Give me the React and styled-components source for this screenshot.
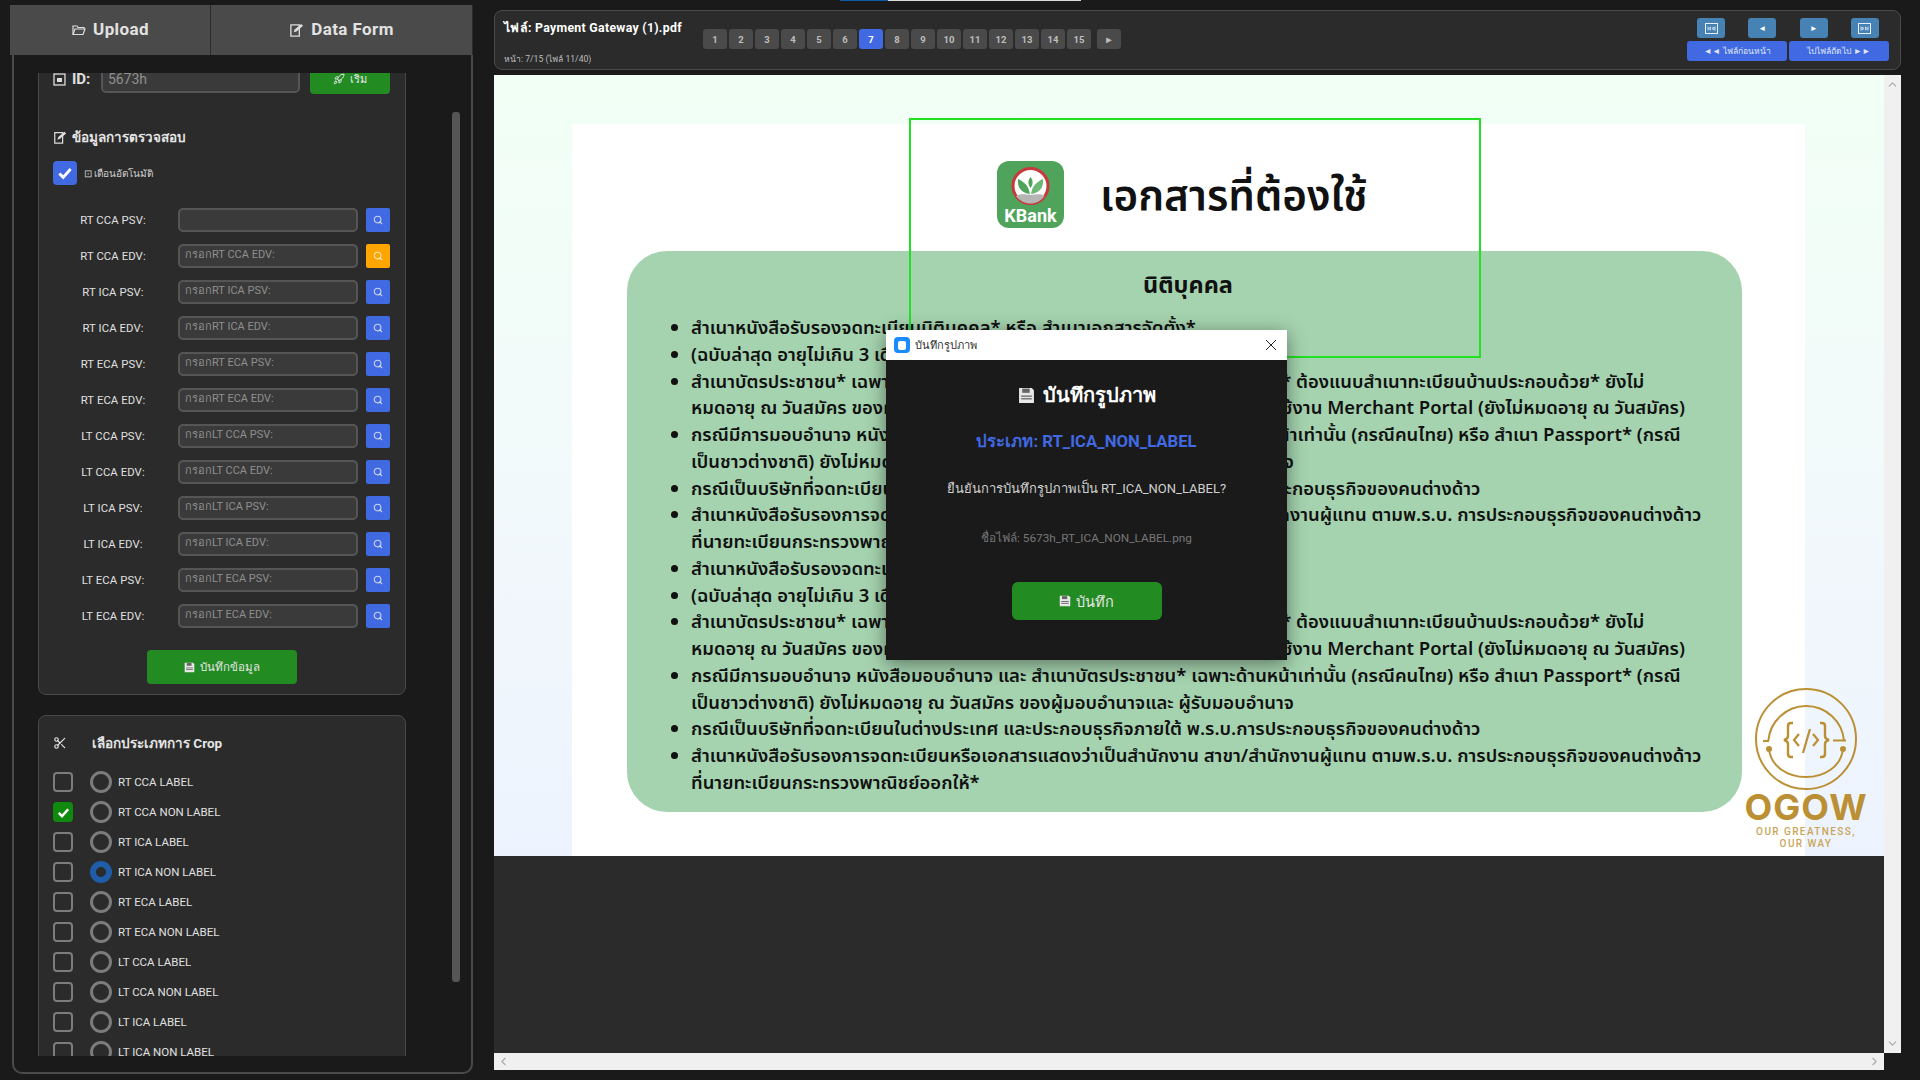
import React from 'react';
import styled, { createGlobalStyle } from 'styled-components';
import { Scissors, Rocket, Search, ChevronUp, ChevronDown, ChevronLeft, ChevronRight } from 'lucide-react';

const GlobalStyle = createGlobalStyle`
    html, body { margin: 0; padding: 0; width: 1920px; height: 1080px; overflow: hidden; background: #1a1a1a; }
    * { box-sizing: border-box; }
    body { font-family: Roboto, "Noto Sans", "Liberation Sans", sans-serif; color: #fff; }
`;

const Page = styled.div`
    display: flex;
    width: 1920px;
    height: 1080px;
    padding: 5px 19px 6px 10px;
    gap: 21px;
    position: relative;
`;

const TopStrip = styled.div`
    position: absolute;
    left: 840px;
    top: 0;
    width: 241px;
    height: 1px;
    background: linear-gradient(90deg, #0f5da8 0 48px, #ddd 48px);
`;

const SidePanel = styled.aside`
    width: 463px;
    display: flex;
    flex-direction: column;
`;

const TabBar = styled.div`
    display: flex;
    height: 50px;
    flex: none;
`;

const Tab = styled.div`
    width: ${props => props.$width}px;
    background: #4a4a4a;
    display: flex;
    align-items: center;
    justify-content: center;
    gap: 7px;
    padding-bottom: 2px;
    font-size: 17px;
    font-weight: 700;
    letter-spacing: 0.4px;
    color: #e2e2e2;
    border-right: 1px solid #2b2b2b;
`;

const SideBody = styled.div`
    flex: 1;
    margin-left: 2px;
    border: 2px solid #4a4a4a;
    border-top: none;
    border-radius: 0 0 10px 10px;
    position: relative;
    padding: 18px 0 0 24px;
`;

const ScrollClip = styled.div`
    width: 368px;
    height: 983px;
    overflow: hidden;
`;

const ScrollInner = styled.div`
    margin-top: -23px;
    display: flex;
    flex-direction: column;
    gap: 20px;
`;

const Card = styled.section`
    background: #2b2b2b;
    border: 1px solid #484848;
    border-radius: 8px;
    padding: 14px 15px 10px 14px;
`;

const GreenButton = styled.div`
    background: #228b22;
    border-radius: ${props => props.$radius || 4}px;
    color: #e6e6e6;
    display: flex;
    align-items: center;
    justify-content: center;
    gap: 5px;
    width: ${props => props.$width}px;
    height: ${props => props.$height}px;
    font-size: ${props => props.$size}px;
    ${props => props.$center ? 'margin: 0 auto;' : ''}
`;

const Input = styled.div`
    height: 24px;
    background: #3a3a3a;
    border: 2px solid #555;
    border-radius: 5px;
    font-size: ${props => props.$size || 11}px;
    color: #8f8f8f;
    padding: 0 5px;
    line-height: 18px;
    white-space: nowrap;
    overflow: hidden;
    width: ${props => props.$width || 180}px;
`;

const IdRow = styled.div`
    display: flex;
    align-items: center;
    gap: 6px;
    height: 30px;
    margin-top: -1px;
    ${GreenButton} {
        margin-left: 4px;
    }
    ${Input} {
        height: 28px;
        line-height: 24px;
    }
`;

const IdLabel = styled.b`
    font-size: 15px;
    width: 23px;
    color: #e0e0e0;
`;

const SectionTitle = styled.h3`
    margin: ${props => props.$margin};
    font-size: 13.5px;
    font-weight: 700;
    color: #e4e4e4;
    display: flex;
    align-items: center;
    height: 20px;
    gap: ${props => props.$gap}px;
`;

const AutoRow = styled.div`
    display: flex;
    align-items: center;
    gap: 7px;
    margin-bottom: 23px;
    font-size: 10px;
    color: #cfcfcf;
`;

const BigCheck = styled.div`
    width: 24px;
    height: 24px;
    border-radius: 4px;
    background: #4169e1;
    display: flex;
    align-items: center;
    justify-content: center;
`;

const FieldList = styled.div`
    display: flex;
    flex-direction: column;
    gap: 12px;
    margin-bottom: 22px;
`;

const FieldRow = styled.div`
    display: flex;
    align-items: center;
    height: 24px;
`;

const FieldLabel = styled.label`
    width: 100px;
    margin-left: 10px;
    margin-right: 15px;
    text-align: center;
    font-size: 11.3px;
    letter-spacing: 0.1px;
    color: #e0e0e0;
`;

const LookupButton = styled.div`
    width: 24px;
    height: 24px;
    margin-left: 8px;
    border-radius: 2px;
    background: ${props => props.$warn ? '#ffa500' : '#4169e1'};
    display: flex;
    align-items: center;
    justify-content: center;
    color: rgba(255, 255, 255, 0.72);
`;

const CropList = styled.div`
    display: flex;
    flex-direction: column;
    gap: 8px;
    margin-top: 18px;
`;

const CropRow = styled.div`
    display: flex;
    align-items: center;
    height: 22px;
    font-size: 11.5px;
    color: #e0e0e0;
`;

const SmallCheck = styled.div`
    width: 20px;
    height: 20px;
    border-radius: 4px;
    margin-right: 17px;
    border: 2px solid #7c7c7c;
    ${props => props.$on && 'background: #0f8a0f; border: none;'}
    display: flex;
    align-items: center;
    justify-content: center;
`;

const Radio = styled.div`
    width: 22px;
    height: 22px;
    border-radius: 50%;
    margin-right: 6px;
    border: ${props => props.$on ? '6px solid #1f5da8' : '3px solid #7c7c7c'};
`;

const SideScrollbar = styled.div`
    position: absolute;
    left: 438px;
    top: 57px;
    width: 8px;
    height: 870px;
    background: #555;
    border-radius: 3px;
`;

const Main = styled.main`
    width: 1407px;
    display: flex;
    flex-direction: column;
    padding: 5px 0 4px;
    gap: 5px;
`;

const Header = styled.header`
    height: 60px;
    flex: none;
    background: #2b2b2b;
    border: 1px solid #4a4a4a;
    border-radius: 8px;
    display: flex;
    padding: 0 11px 0 9px;
`;

const FileInfo = styled.div`
    width: 199px;
    display: flex;
    flex-direction: column;
    justify-content: space-between;
    padding: 7px 0 3px;
`;

const FileName = styled.b`
    font-size: 12.3px;
    letter-spacing: 0.3px;
    white-space: nowrap;
`;

const FilePage = styled.span`
    font-size: 8.6px;
    color: #bbb;
`;

const Pager = styled.div`
    display: flex;
    gap: 2px;
    margin-top: 18px;
    flex: 1;
`;

const PageButton = styled.div`
    width: 24px;
    height: 20px;
    border-radius: 3px;
    background: ${props => props.$active ? '#4169e1' : '#4a4a4a'};
    color: ${props => props.$active ? '#fff' : '#bdbdbd'};
    margin-left: ${props => props.$next ? 4 : 0}px;
    font-size: 9.5px;
    font-weight: 700;
    display: flex;
    align-items: center;
    justify-content: center;
`;

const NavBlock = styled.div`
    width: 202px;
    display: flex;
    flex-direction: column;
    gap: 3px;
    padding-top: 7px;
`;

const NavIcons = styled.div`
    display: flex;
    justify-content: space-between;
    padding: 0 10px;
`;

const NavIcon = styled.div`
    width: 28px;
    height: 20px;
    background: #4682b4;
    border-radius: 3px;
    font-size: 8px;
    display: flex;
    align-items: center;
    justify-content: center;
`;

const NavRow = styled.div`
    display: flex;
    gap: 2px;
`;

const NavButton = styled.div`
    width: 100px;
    height: 20px;
    background: #4169e1;
    border-radius: 3px;
    font-size: 8.6px;
    color: #dfe6fa;
    display: flex;
    align-items: center;
    justify-content: center;
`;

const Viewer = styled.div`
    flex: 1;
    display: grid;
    grid-template-columns: 1fr 17px;
    grid-template-rows: 1fr 17px;
`;

const Canvas = styled.div`
    background: #2b2b2b;
    overflow: hidden;
    position: relative;
`;

const Slide = styled.div`
    height: 781px;
    background: linear-gradient(180deg, #f1fff5 0%, #f2f9fb 55%, #edf3fe 100%);
    padding: 49px 79px 0 78px;
`;

const SlideSheet = styled.div`
    background: #fff;
    height: 732px;
    padding-top: 37px;
`;

const SlideHead = styled.div`
    display: flex;
    align-items: center;
    margin-left: 425px;
    height: 67px;
    gap: 36px;
`;

const SlideTitle = styled.h1`
    margin: 0;
    padding-top: 4px;
    font-family: "Noto Sans Thai", "Noto Sans", "DejaVu Sans", sans-serif;
    font-size: 42.2px;
    font-weight: 600;
    color: #111;
`;

const GreenBox = styled.div`
    background: #a5d3af;
    border-radius: 40px;
    margin: 23px 0 0 55px;
    width: 1115px;
    height: 561px;
    padding: 19px 20px 0 49px;
    color: #111;
    font-family: "Noto Sans Thai", "Noto Sans", "DejaVu Sans", sans-serif;
`;

const BoxTitle = styled.h2`
    margin: 0 0 13px -22px;
    text-align: center;
    font-size: 23.5px;
    font-weight: 700;
    line-height: 32px;
`;

const BulletList = styled.ul`
    margin: 0;
    padding-left: 15px;
    font-size: 18.45px;
    font-weight: 600;
    line-height: 26.75px;
    white-space: nowrap;
`;

const DocItem = styled.li`
    white-space: pre;
`;

const SelectBox = styled.div`
    position: absolute;
    left: 415px;
    top: 43px;
    width: 572px;
    height: 240px;
    border: 2px solid #22e022;
`;

const ScrollV = styled.div`
    background: #f0f0f0;
    color: #a8a8a8;
    display: flex;
    flex-direction: column;
    justify-content: space-between;
    align-items: center;
    padding: 3px 0;
`;

const ScrollH = styled.div`
    background: #f0f0f0;
    color: #a8a8a8;
    display: flex;
    justify-content: space-between;
    align-items: center;
    padding: 0 3px;
`;

const Modal = styled.div`
    position: absolute;
    left: 886px;
    top: 330px;
    width: 401px;
    height: 330px;
    background: #1a1a1a;
    box-shadow: 0 4px 18px rgba(0,0,0,0.45);
    display: flex;
    flex-direction: column;
`;

const ModalBar = styled.div`
    height: 30px;
    background: #fff;
    color: #333;
    font-size: 11px;
    display: flex;
    align-items: center;
    padding: 0 8px;
    gap: 5px;
`;

const AppIcon = styled.span`
    width: 16px;
    height: 16px;
    border-radius: 4px;
    background: #1a8cff;
    display: flex;
    align-items: center;
    justify-content: center;
    &::after {
        content: '';
        width: 8px;
        height: 9px;
        background: #fff;
        border-radius: 2px;
    }
`;

const ModalClose = styled.span`
    margin-left: auto;
    margin-right: 2px;
    display: flex;
`;

const ModalBody = styled.div`
    flex: 1;
    display: flex;
    flex-direction: column;
    align-items: center;
    padding-top: 21px;
`;

const ModalTitle = styled.div`
    font-size: 20px;
    font-weight: 700;
    display: flex;
    align-items: center;
    gap: 8px;
    height: 28px;
`;

const ModalType = styled.div`
    font-size: 16.7px;
    font-weight: 700;
    color: #4169e1;
    margin-top: 19px;
    height: 26px;
`;

const ModalText = styled.div`
    font-size: 13px;
    color: #d0d0d0;
    margin-top: 24px;
`;

const ModalFile = styled.div`
    font-size: 11.8px;
    color: #777;
    margin-top: 29px;
    margin-bottom: 35px;
`;

const OgowLogo = styled.div`
    position: absolute;
    left: 1248px;
    top: 612px;
    width: 128px;
    display: flex;
    flex-direction: column;
    align-items: center;
    color: #bb9035;
`;

const OgowName = styled.div`
    font-family: Inter, Roboto, sans-serif;
    font-size: 36px;
    font-weight: 700;
    line-height: 32px;
    letter-spacing: 1px;
`;

const OgowTag = styled.div`
    font-size: 10px;
    letter-spacing: 1.4px;
    text-align: center;
    line-height: 12px;
    margin-top: 3px;
    font-weight: 500;
    color: #c9a558;
    white-space: nowrap;
`;

const Floppy = ({ size = 14, fill = '#e8e8e8' }) => (
    <svg width={size} height={size} viewBox="0 0 16 16">
        <path d="M1 1h12l2 2v12H1z" fill={fill} />
        <rect x="4" y="1.5" width="7" height="4" fill="#666" />
        <rect x="3" y="8" width="10" height="1.2" fill="#666" />
        <rect x="3" y="10.5" width="10" height="1.2" fill="#666" />
    </svg>
);

const Memo = ({ size = 14 }) => (
    <svg width={size} height={size} viewBox="0 0 16 16" fill="none" stroke="#ddd" strokeWidth="1.4">
        <path d="M2 3h9v12H2z" />
        <path d="M5 11l1-3 7-6 2 2-7 6z" fill="#ddd" stroke="none" />
    </svg>
);

const Folder = () => (
    <svg width="15" height="13" viewBox="0 0 15 13" fill="none" stroke="#ddd" strokeWidth="1.2">
        <path d="M2 11V3h4l1 1.5h6V6" />
        <path d="M2 11.5h10L14 6H4z" />
    </svg>
);

const IdIcon = () => (
    <svg width="13" height="13" viewBox="0 0 13 13" fill="none" stroke="#ddd" strokeWidth="1.3">
        <rect x="1" y="1" width="11" height="11" />
        <rect x="4" y="5" width="5" height="4" fill="#ddd" stroke="none" />
    </svg>
);

const Tick = ({ size }) => (
    <svg width={size} height={size} viewBox="0 0 16 16" fill="none" stroke="#fff" strokeWidth="2.6">
        <path d="M3 8.5l3.4 3.4L13 4.5" />
    </svg>
);

const SkipIcon = ({ back }) => (
    <svg width="13" height="11" viewBox="0 0 13 11" fill="none" stroke="#e6eef6">
        <rect x="0.5" y="0.5" width="12" height="10" />
        <path d={back ? 'M3 3.5v4M10 3.5v4M3.5 5.5l2-1.5v3zM7 5.5l2-1.5v3z' : 'M3 3.5v4M10 3.5v4M9.5 5.5l-2-1.5v3zM6 5.5l-2-1.5v3z'} strokeWidth="0.8" />
    </svg>
);

const KBankLogo = () => (
    <svg width="67" height="67" viewBox="0 0 67 67">
        <rect width="67" height="67" rx="12" fill="#4fa35a" />
        <circle cx="33.5" cy="25" r="17.5" fill="#fff" stroke="#c8383c" strokeWidth="3" />
        <path d="M19 35c6-3 10-1 14.5-1s9-2 14 1c-3 5-9 7.500-14 7.500s-11-2.500-14.500-7.500z" fill="#b5b5b5" />
        <path d="M33 36c0-8-3-14-12-18-1 9 4 14 12 15z" fill="#4fa35a" />
        <path d="M34 36c0-8 3-14 12-18 1 9-4 14-12 15z" fill="#6db775" />
        <path d="M33.500 27c-3-4-2.500-8 0-11 2.500 3 3 7 0 11z" fill="#4fa35a" />
        <text x="33.5" y="61" textAnchor="middle" fontFamily="Roboto, sans-serif" fontWeight="700" fontSize="18" fill="#fff">KBank</text>
    </svg>
);

const OgowMark = () => (
    <svg width="104" height="104" viewBox="0 0 104 104" fill="none" stroke="#bb9035" strokeWidth="2">
        <circle cx="52" cy="52" r="50" />
        <path d="M9 54h6M14.300 53.700A38 38 0 0 1 90 53.700M79 53.500h13" />
        <path d="M15 62C17 80 34 90 52 90S87 80 89 62" />
        <circle cx="15" cy="62" r="2" fill="#bb9035" />
        <circle cx="89" cy="62" r="2" fill="#bb9035" />
        <path d="M39 36h-2q-3 0-3 3v10q0 3-4 4q4 1 4 4v10q0 3 3 3h2" strokeWidth="2.4" />
        <path d="M66 36h2q3 0 3 3v10q0 3 4 4q-4 1-4 4v10q0 3-3 3h-2" strokeWidth="2.4" />
        <path d="M45 47l-5 6 5 6M56 42L49 66M59 47l5 6-5 6" strokeWidth="2.2" />
    </svg>
);

const fields = ['RT CCA PSV:', 'RT CCA EDV:', 'RT ICA PSV:', 'RT ICA EDV:', 'RT ECA PSV:', 'RT ECA EDV:', 'LT CCA PSV:', 'LT CCA EDV:', 'LT ICA PSV:', 'LT ICA EDV:', 'LT ECA PSV:', 'LT ECA EDV:'];
const crops = ['RT CCA LABEL', 'RT CCA NON LABEL', 'RT ICA LABEL', 'RT ICA NON LABEL', 'RT ECA LABEL', 'RT ECA NON LABEL', 'LT CCA LABEL', 'LT CCA NON LABEL', 'LT ICA LABEL', 'LT ICA NON LABEL'];
const docLines = [
    'สำเนาหนังสือรับรองจดทะเบียนนิติบุคคล* หรือ สำเนาเอกสารจัดตั้ง*',
    '(ฉบับล่าสุด อายุไม่เกิน 3 เดือน)',
    'สำเนาบัตรประชาชน* เฉพาะด้านหน้าเท่านั้น ของผู้มีอำนาจ (ทะเบียนพาณิช/ธุรกิจ* ต้องแนบสำเนาทะเบียนบ้านประกอบด้วย* ยังไม่\nหมดอายุ ณ วันสมัคร ของผู้มีอำนาจลงนาม ท่านตามหนังสือรับรองบริษัท และ ผู้ใช้งาน Merchant Portal (ยังไม่หมดอายุ ณ วันสมัคร)',
    'กรณีมีการมอบอำนาจ หนังสือมอบอำนาจ และ สำเนาบัตรประชาชน* เฉพาะด้านหน้าเท่านั้น (กรณีคนไทย) หรือ สำเนา Passport* (กรณี\nเป็นชาวต่างชาติ) ยังไม่หมดอายุ ณ วันสมัคร ของผู้มอบอำนาจและ ผู้รับมอบอำนาจ',
    'กรณีเป็นบริษัทที่จดทะเบียนในต่างประเทศ และประกอบธุรกิจภายใต้ พ.ร.บ.การประกอบธุรกิจของคนต่างด้าว',
    'สำเนาหนังสือรับรองการจดทะเบียนหรือเอกสารแสดงว่าเป็นสำนักงาน สาขา/สำนักงานผู้แทน ตามพ.ร.บ. การประกอบธุรกิจของคนต่างด้าว\nที่นายทะเบียนกระทรวงพาณิชย์ออกให้*',
];
const pages = Array.from({ length: 15 }, (_, i) => i + 1);

export default function App() {
    return (
        <Page>
            <GlobalStyle />
            <TopStrip />
            <SidePanel>
                <TabBar>
                    <Tab $width={201}><Folder /> Upload</Tab>
                    <Tab $width={262}><Memo size={15} /> Data Form</Tab>
                </TabBar>
                <SideBody>
                    <ScrollClip>
                        <ScrollInner>
                            <Card>
                                <IdRow>
                                    <IdIcon />
                                    <IdLabel>ID:</IdLabel>
                                    <Input $width={200} $size={14}>5673h</Input>
                                    <GreenButton $width={80} $height={30} $size={11}><Rocket size={12} /> เริ่ม</GreenButton>
                                </IdRow>
                                <SectionTitle $margin="33px 0 14px" $gap={5}><Memo /> ข้อมูลการตรวจสอบ</SectionTitle>
                                <AutoRow>
                                    <BigCheck><Tick size={18} /></BigCheck>
                                    ⊡ เตือนอัตโนมัติ
                                </AutoRow>
                                <FieldList>
                                    {fields.map((f, i) => (
                                        <FieldRow key={f}>
                                            <FieldLabel>{f}</FieldLabel>
                                            <Input>{i > 0 ? `กรอก${f}` : ''}</Input>
                                            <LookupButton $warn={i === 1}><Search size={10} strokeWidth={2.6} /></LookupButton>
                                        </FieldRow>
                                    ))}
                                </FieldList>
                                <GreenButton $center $width={150} $height={34} $size={11.5}><Floppy size={11} /> บันทึกข้อมูล</GreenButton>
                            </Card>
                            <Card>
                                <SectionTitle $margin="3px 0 0" $gap={25}><Scissors size={14} /> เลือกประเภทการ Crop</SectionTitle>
                                <CropList>
                                    {crops.map((c, i) => (
                                        <CropRow key={c}>
                                            <SmallCheck $on={i === 1}>{i === 1 && <Tick size={15} />}</SmallCheck>
                                            <Radio $on={i === 3} />
                                            {c}
                                        </CropRow>
                                    ))}
                                </CropList>
                            </Card>
                        </ScrollInner>
                    </ScrollClip>
                    <SideScrollbar />
                </SideBody>
            </SidePanel>
            <Main>
                <Header>
                    <FileInfo>
                        <FileName>ไฟล์: Payment Gateway (1).pdf</FileName>
                        <FilePage>หน้า: 7/15 (ไฟล์ 11/40)</FilePage>
                    </FileInfo>
                    <Pager>
                        {pages.map(p => <PageButton key={p} $active={p === 7}>{p}</PageButton>)}
                        <PageButton $next>►</PageButton>
                    </Pager>
                    <NavBlock>
                        <NavIcons>
                            <NavIcon><SkipIcon back /></NavIcon>
                            <NavIcon>◄</NavIcon>
                            <NavIcon>►</NavIcon>
                            <NavIcon><SkipIcon /></NavIcon>
                        </NavIcons>
                        <NavRow>
                            <NavButton>◄◄ ไฟล์ก่อนหน้า</NavButton>
                            <NavButton>ไปไฟล์ถัดไป ►►</NavButton>
                        </NavRow>
                    </NavBlock>
                </Header>
                <Viewer>
                    <Canvas>
                        <Slide>
                            <SlideSheet>
                                <SlideHead>
                                    <KBankLogo />
                                    <SlideTitle>เอกสารที่ต้องใช้</SlideTitle>
                                </SlideHead>
                                <GreenBox>
                                    <BoxTitle>นิติบุคคล</BoxTitle>
                                    <BulletList>
                                        {docLines.map((l, i) => <DocItem key={i}>{l}</DocItem>)}
                                        {docLines.map((l, i) => <DocItem key={`again-${i}`}>{l}</DocItem>)}
                                    </BulletList>
                                </GreenBox>
                            </SlideSheet>
                        </Slide>
                        <SelectBox />
                        <OgowLogo>
                            <OgowMark />
                            <OgowName>OGOW</OgowName>
                            <OgowTag>OUR GREATNESS,<br />OUR WAY</OgowTag>
                        </OgowLogo>
                    </Canvas>
                    <ScrollV><ChevronUp size={13} /><ChevronDown size={13} /></ScrollV>
                    <ScrollH><ChevronLeft size={13} /><ChevronRight size={13} /></ScrollH>
                </Viewer>
            </Main>
            <Modal>
                <ModalBar>
                    <AppIcon />
                    บันทึกรูปภาพ
                    <ModalClose>
                        <svg width="12" height="12" viewBox="0 0 12 12" stroke="#222" strokeWidth="1"><path d="M1 1l10 10M11 1L1 11" /></svg>
                    </ModalClose>
                </ModalBar>
                <ModalBody>
                    <ModalTitle><Floppy size={17} /> บันทึกรูปภาพ</ModalTitle>
                    <ModalType>ประเภท: RT_ICA_NON_LABEL</ModalType>
                    <ModalText>ยืนยันการบันทึกรูปภาพเป็น RT_ICA_NON_LABEL?</ModalText>
                    <ModalFile>ชื่อไฟล์: 5673h_RT_ICA_NON_LABEL.png</ModalFile>
                    <GreenButton $width={150} $height={38} $size={14.5} $radius={6}><Floppy size={12} /> บันทึก</GreenButton>
                </ModalBody>
            </Modal>
        </Page>
    );
}
